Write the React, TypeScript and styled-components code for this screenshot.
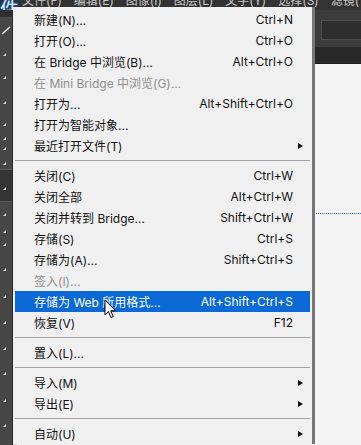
import React from "react";
import styled, { createGlobalStyle } from "styled-components";

const GlobalStyle = createGlobalStyle`
  html, body {
    margin: 0;
    padding: 0;
    background: #2b2b2b;
  }
  * {
    box-sizing: border-box;
  }
`;

type MenuEntry =
  | { kind: "sep" }
  | {
      kind: "item";
      label: string;
      shortcut?: string;
      submenu?: boolean;
      disabled?: boolean;
      active?: boolean;
    };

const menuEntries: MenuEntry[] = [
  { kind: "item", label: "新建(N)...", shortcut: "Ctrl+N" },
  { kind: "item", label: "打开(O)...", shortcut: "Ctrl+O" },
  { kind: "item", label: "在 Bridge 中浏览(B)...", shortcut: "Alt+Ctrl+O" },
  { kind: "item", label: "在 Mini Bridge 中浏览(G)...", disabled: true },
  { kind: "item", label: "打开为...", shortcut: "Alt+Shift+Ctrl+O" },
  { kind: "item", label: "打开为智能对象..." },
  { kind: "item", label: "最近打开文件(T)", submenu: true },
  { kind: "sep" },
  { kind: "item", label: "关闭(C)", shortcut: "Ctrl+W" },
  { kind: "item", label: "关闭全部", shortcut: "Alt+Ctrl+W" },
  { kind: "item", label: "关闭并转到 Bridge...", shortcut: "Shift+Ctrl+W" },
  { kind: "item", label: "存储(S)", shortcut: "Ctrl+S" },
  { kind: "item", label: "存储为(A)...", shortcut: "Shift+Ctrl+S" },
  { kind: "item", label: "签入(I)...", disabled: true },
  {
    kind: "item",
    label: "存储为 Web 所用格式...",
    shortcut: "Alt+Shift+Ctrl+S",
    active: true,
  },
  { kind: "item", label: "恢复(V)", shortcut: "F12" },
  { kind: "sep" },
  { kind: "item", label: "置入(L)..." },
  { kind: "sep" },
  { kind: "item", label: "导入(M)", submenu: true },
  { kind: "item", label: "导出(E)", submenu: true },
  { kind: "sep" },
  { kind: "item", label: "自动(U)", submenu: true },
];

const topMenus = ["文件(F)", "编辑(E)", "图像(I)", "图层(L)", "文字(Y)", "选择(S)", "滤镜(T)"];

// tool strip marker rows (y offsets of the little corner triangles)
const toolMarks = [53, 76, 101, 123, 137, 147, 162, 187, 213, 230, 243, 268, 295, 321, 347, 372, 399, 424];

const Frame = styled.div`
  position: relative;
  width: 361px;
  height: 445px;
  overflow: hidden;
  background: #2b2b2b;
  font-family: Inter, "Noto Sans CJK SC", sans-serif;
  display: flex;
  flex-direction: column;
`;

const MenuBar = styled.div`
  height: 10px;
  flex: none;
  display: flex;
  gap: 12px;
  padding-left: 22px;
  background: #333333;
  overflow: hidden;
`;

const MenuBarItem = styled.span`
  font-size: 12px;
  line-height: 12px;
  margin-top: -5px;
  color: #c8c8c8;
  white-space: nowrap;
`;

const ActiveGlyph = styled.span`
  position: absolute;
  left: 0;
  top: -2px;
  font-family: "Noto Sans CJK SC", sans-serif;
  font-size: 19px;
  line-height: 19px;
  color: #d8ecff;
  text-shadow: 0 0 2px #2f7fe0, 0 0 1px #2f7fe0;
  background: #2a3542;
  padding-right: 2px;
`;

const Body = styled.div`
  flex: 1;
  display: flex;
  min-height: 0;
`;

const ToolStrip = styled.div`
  position: relative;
  width: 13px;
  flex: none;
  background: #474747;
  border-right: 1px solid #262626;
  border-top: 7px solid #2e2e2e;
`;

const ToolMark = styled.span`
  position: absolute;
  left: 3px;
  width: 0;
  height: 0;
  border-left: 3px solid transparent;
  border-bottom: 3px solid #d8d8d8;
`;

const ActiveTool = styled.div`
  position: absolute;
  left: 0;
  right: 0;
  top: 152px;
  height: 33px;
  background: #353535;
  border-top: 1px solid #5a5a5a;
  border-bottom: 1px solid #5a5a5a;
`;

const PenIcon = styled.svg`
  position: absolute;
  left: 1px;
  top: 8px;
`;

const Workspace = styled.div`
  flex: 1;
  display: flex;
  flex-direction: column;
`;

const OptionsBar = styled.div`
  height: 37px;
  flex: none;
  background: #3c3c3c;
  display: flex;
  justify-content: flex-end;
  align-items: center;
  padding-top: 2px;
`;

const OptionsField = styled.div`
  width: 40px;
  height: 20px;
  background: #2e2e2e;
  border: 1px solid #4e4e4e;
  border-right: none;
`;

const TabBar = styled.div`
  height: 17px;
  flex: none;
  background: #282828;
  border-bottom: 1px solid #1e1e1e;
`;

const Canvas = styled.div`
  flex: 1;
  background: #f4f4f4;
  border-left: 4px solid #d4d4d4;
  padding-top: 149px;
`;

const Guide = styled.div`
  border-top: 1px dotted #3f78c8;
  margin-left: -4px;
`;

const DropMenu = styled.div`
  position: absolute;
  left: 13px;
  top: 7px;
  width: 302px;
  background: #f0f0f0;
  border-right: 3px solid #777777;
  padding: 2px 2px 0 2px;
  display: flex;
  flex-direction: column;
`;

const Item = styled.div<{ $active?: boolean; $disabled?: boolean }>`
  height: 21px;
  display: grid;
  grid-template-columns: 1fr auto 10px;
  align-items: center;
  padding: 0 7px 0 19px;
  font-size: 12px;
  white-space: nowrap;
  color: ${(p) => (p.$active ? "#ffffff" : p.$disabled ? "#8e8e8e" : "#111111")};
  background: ${(p) => (p.$active ? "#0a69d4" : "transparent")};
`;

const Label = styled.span`
  overflow: hidden;
`;

const Shortcut = styled.span`
  text-align: right;
`;

const SubArrow = styled.span`
  justify-self: end;
  width: 0;
  height: 0;
  border-left: 5px solid #111111;
  border-top: 3.5px solid transparent;
  border-bottom: 3.5px solid transparent;
`;

const Separator = styled.div`
  height: 1px;
  margin: 4px 0;
  background: #a3a3a3;
`;

const Cursor = styled.svg`
  position: absolute;
  left: 104px;
  top: 299px;
`;

const App: React.FC = () => {
  return (
    <Frame>
      <GlobalStyle />
      <MenuBar>
        {topMenus.map((m) => (
          <MenuBarItem key={m}>{m}</MenuBarItem>
        ))}
      </MenuBar>
      <ActiveGlyph>件</ActiveGlyph>
      <Body>
        <ToolStrip>
          <PenIcon width="10" height="10" viewBox="0 0 10 10">
            <path d="M1 9 L9 2" stroke="#e8e8e8" strokeWidth="1.6" />
          </PenIcon>
          <ActiveTool />
          {toolMarks.map((y) => (
            <ToolMark key={y} style={{ top: y - 17 }} />
          ))}
        </ToolStrip>
        <Workspace>
          <OptionsBar>
            <OptionsField />
          </OptionsBar>
          <TabBar />
          <Canvas>
            <Guide />
          </Canvas>
        </Workspace>
      </Body>
      <DropMenu>
        {menuEntries.map((e, i) =>
          e.kind === "sep" ? (
            <Separator key={i} />
          ) : (
            <Item key={i} $active={e.active} $disabled={e.disabled}>
              <Label>{e.label}</Label>
              <Shortcut>{e.shortcut}</Shortcut>
              {e.submenu ? <SubArrow /> : <span />}
            </Item>
          )
        )}
      </DropMenu>
      <Cursor width="13" height="21" viewBox="0 0 13 21">
        <path
          d="M1 1 L1 16 L4.5 12.5 L7 18.5 L9.2 17.6 L6.8 11.8 L11.5 11.8 Z"
          fill="#ffffff"
          stroke="#000000"
          strokeWidth="1"
          strokeLinejoin="miter"
        />
      </Cursor>
    </Frame>
  );
};

export default App;
